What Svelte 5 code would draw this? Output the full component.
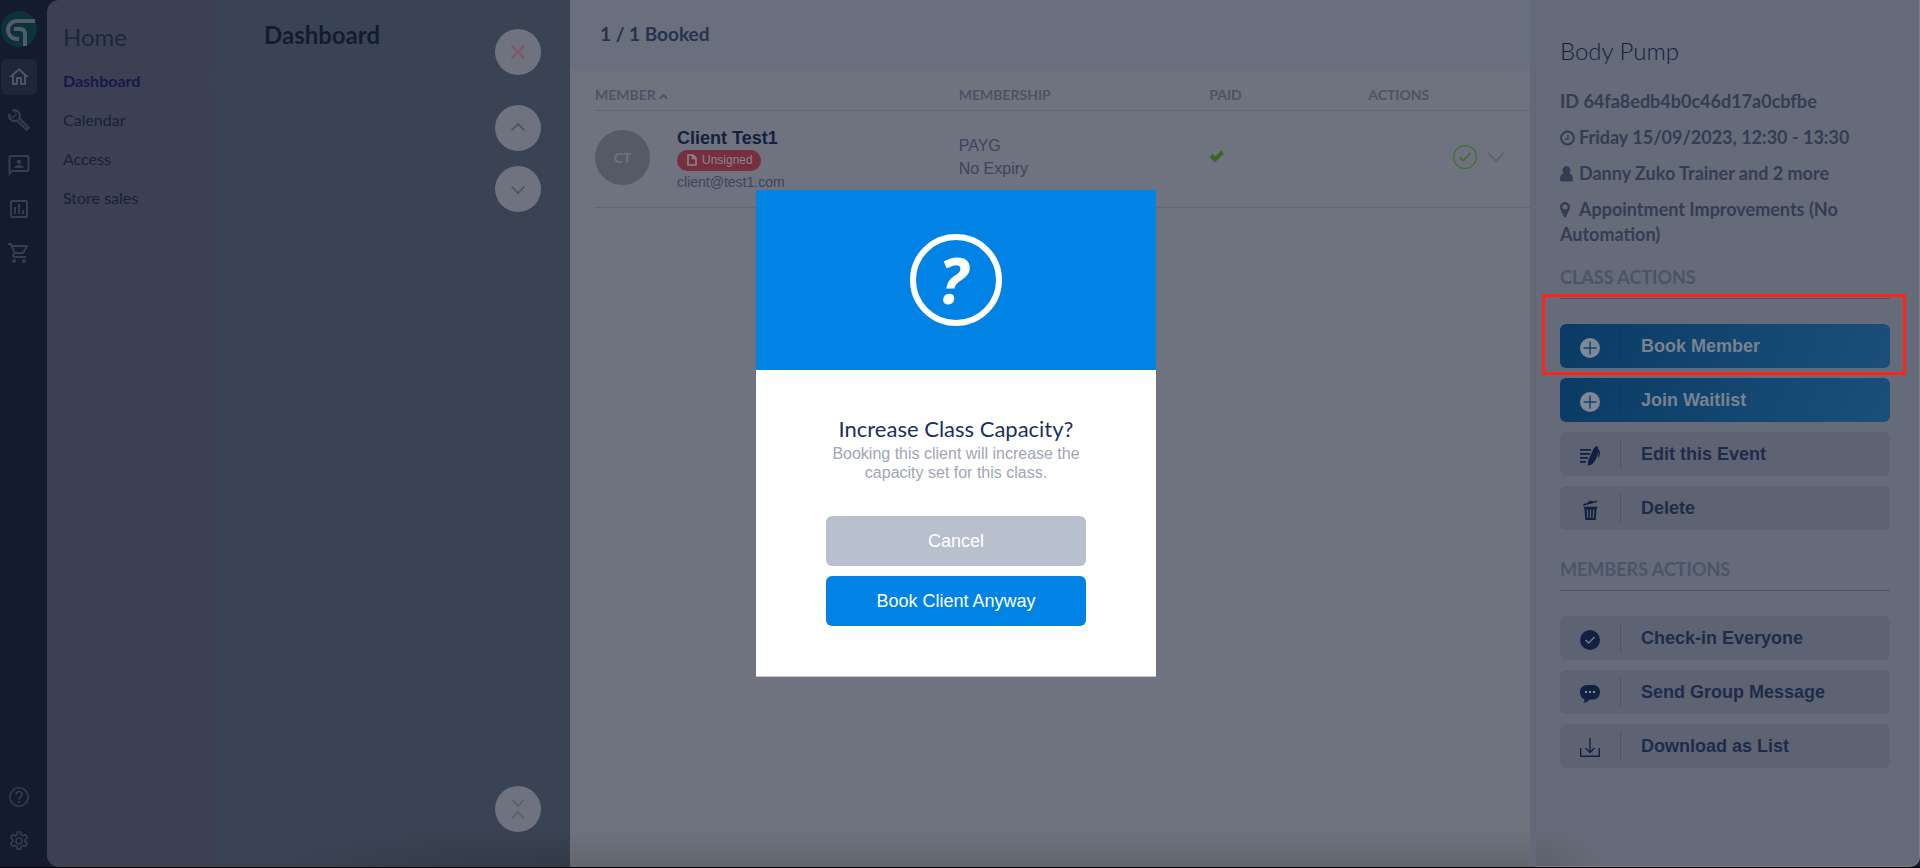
<script lang="ts">
    const links = ['Dashboard', 'Calendar', 'Access', 'Store sales'];

    const classActions = [
        { label: 'Book Member', icon: 'plus', primary: true, marked: true },
        { label: 'Join Waitlist', icon: 'plus', primary: true },
        { label: 'Edit this Event', icon: 'edit' },
        { label: 'Delete', icon: 'trash' }
    ];

    const memberActions = [
        { label: 'Check-in Everyone', icon: 'check' },
        { label: 'Send Group Message', icon: 'message' },
        { label: 'Download as List', icon: 'download' }
    ];

    let modalOpen = $state(true);

    function closeModal() {
        modalOpen = false;
    }
</script>

{#snippet action(item: any)}
    <button class="action" class:primary={item.primary} class:marked={item.marked}>
        <span class="action-icon">
            <svg width="20" height="20" viewBox="0 0 20 20" fill="currentColor">
                {#if item.icon === 'plus'}
                    <circle cx="10" cy="10" r="10" />
                    <path d="M10 3.5v13M3.5 10h13" stroke="#12426a" stroke-width="1.4" />
                {:else if item.icon === 'edit'}
                    <path d="M0 3h11v1.8H0zM0 7h10v1.8H0zM0 11h8v1.8H0zM0 15h6v1.8H0z" />
                    <path d="M8 19.500c-.4-3 .4-6 2.200-9.600C12 6 13.500 2 15.500.500c.8-.7 2.300-.3 2.500.7l.1 2 1.400 1.600c.8 1 .6 2.200.2 3.600l-1 3-1-.3.9-3.500c.2-.8.100-1.200-.3-1.600-.5 2.500-1.500 5.600-3.300 8.700-1.500 2.600-3.300 4.300-7 4.800z" />
                {:else if item.icon === 'trash'}
                    <path d="M3 4.300 8 2.800 8.400 1.400l3.400-.8 1 .9L16.700.4l.4 1.500L3.500 5.800z" />
                    <path d="M3.700 6.700h13.600v1.600h-.7L15.700 20H5.300L4.400 8.300h-.7z" />
                    <path d="M7.300 9.500l.4 8.500M10.500 9.500V18M13.700 9.500l-.4 8.500" stroke="#5d6372" stroke-width="1.200" />
                {:else if item.icon === 'check'}
                    <circle cx="10" cy="10" r="10" />
                    <path d="M5.500 10l3.200 3 5.800-6" fill="none" stroke="#757b87" stroke-width="1.500" />
                {:else if item.icon === 'message'}
                    <path d="M7 1h6c4 0 7 3 7 7s-3 7.500-7 7.500H9.500c-1.200 1.800-3.200 3.300-6.500 3.500 1.200-1 1.700-2.300 1.500-3.800C1.500 14.300 0 11.500 0 8c0-4 3-7 7-7z" />
                    <path d="M5 8h2M9 8h2M13 8h2" stroke="#858b98" stroke-width="2" />
                {:else}
                    <path d="M.7 10v8.300h18.600V10M10 0v14M5.500 10l4.500 4.500L14.500 10" fill="none" stroke="currentColor" stroke-width="1.400" />
                {/if}
            </svg>
        </span>
        <span class="action-label">{item.label}</span>
    </button>
{/snippet}

<div class="app">
    <nav class="rail" aria-label="Main">
        <a class="logo" href="#home" aria-label="Glofox">
            <svg width="36" height="36" viewBox="0 0 36 36">
                <circle cx="18" cy="18" r="18" fill="#0a3439" />
                <path d="M34 10H16a9 9 0 0 0 0 18h2M13 18h6q5 0 5 5v12" fill="none" stroke="#535b6a" stroke-width="4" />
            </svg>
        </a>
        <a class="rail-link current" href="#home" aria-label="Home">
            <svg width="24" height="24" viewBox="0 0 24 24" fill="currentColor"><path d="M12 5.700l5 4.500V18h-2v-6H9v6H7v-7.800l5-4.500M12 3 2 12h3v8h6v-6h2v6h6v-8h3z" /></svg>
        </a>
        <a class="rail-link" href="#setup" aria-label="Setup">
            <svg width="24" height="24" viewBox="0 0 24 24" fill="currentColor"><path d="M22.600 18.200 13.500 9.100c.9-2.300.4-5-1.500-6.900C10 .2 7.100-.2 4.700.8l4.200 4.300-3 3-4.300-4.200C.5 6.300 1 9.200 3 11.200c1.900 1.900 4.600 2.400 6.900 1.500l9.100 9.100c.4.4 1 .4 1.400 0l2.200-2.200c.5-.4.5-1 0-1.400zM19.700 19.700l-9.500-9.500c-.6.5-1.300.7-2 .8-1.300.2-2.700-.2-3.700-1.200C3.500 8.900 3 7.700 3 6.500l3 3L10.200 5.200l-3-3c1.200 0 2.400.5 3.300 1.400 1 1 1.500 2.500 1.200 3.900-.1.700-.4 1.400-.9 2l9.500 9.500z" /></svg>
        </a>
        <a class="rail-link" href="#leads" aria-label="Leads">
            <svg width="24" height="24" viewBox="0 0 24 24" fill="currentColor"><path d="M20.500 2h-17C2.400 2 1.500 2.900 1.500 4v19l4-4h15c1.100 0 2-.9 2-2V4c0-1.100-.9-2-2-2zm0 15H4.700l-1.200 1.200V4h17zM12 11a2.300 2.300 0 1 0 0-4.600A2.300 2.300 0 0 0 12 11zm4.500 4v-.7c0-1.500-3-2.300-4.500-2.300s-4.500.8-4.500 2.300v.7z" /></svg>
        </a>
        <a class="rail-link" href="#reports" aria-label="Reports">
            <svg width="24" height="24" viewBox="0 0 24 24" fill="currentColor"><path d="M19 3H5a2 2 0 0 0-2 2v14a2 2 0 0 0 2 2h14a2 2 0 0 0 2-2V5a2 2 0 0 0-2-2zm0 16H5V5h14zM7 10h2v7H7zM11 7h2v10h-2zM15 13h2v4h-2z" /></svg>
        </a>
        <a class="rail-link" href="#store" aria-label="Store">
            <svg width="24" height="24" viewBox="0 0 24 24" fill="currentColor"><path d="M15.550 13c.75 0 1.410-.41 1.750-1.030l3.580-6.490A.996.996 0 0 0 20.010 4H5.210l-.94-2H1v2h2l3.600 7.590-1.350 2.440C4.520 15.370 5.480 17 7 17h12v-2H7l1.100-2h7.450zM6.160 6h12.150l-2.760 5H8.530L6.160 6zM7 18c-1.100 0-2 .9-2 2s.9 2 2 2 2-.9 2-2-.9-2-2-2zm10 0c-1.100 0-2 .9-2 2s.9 2 2 2 2-.9 2-2-.9-2-2-2z" /></svg>
        </a>
        <a class="rail-link rail-bottom" href="#help" aria-label="Help">
            <svg width="24" height="24" viewBox="0 0 24 24" fill="none" stroke="currentColor" stroke-width="1.600"><circle cx="12" cy="12" r="9.200" /><path d="M9 9.500a3 3 0 1 1 4.700 2.500c-1 .7-1.700 1.200-1.700 2.500M12 16v2" /></svg>
        </a>
        <a class="rail-link" href="#settings" aria-label="Settings">
            <svg width="24" height="24" viewBox="0 0 24 24" fill="none" stroke="currentColor" stroke-width="1.600" stroke-linejoin="round"><path d="M10.300 3h3.400l.5 2.700 1.800 1 2.600-.9 1.700 2.900-2.100 1.800v2.100l2.100 1.800-1.700 2.900-2.600-.9-1.800 1-.5 2.700h-3.400l-.5-2.700-1.800-1-2.600.9-1.700-2.900 2.100-1.800v-2.100L3.700 8.700l1.700-2.900 2.600.9 1.800-1z" /><circle cx="12" cy="12" r="3" /></svg>
        </a>
    </nav>

    <aside class="submenu">
        <h2>Home</h2>
        <ul>
            {#each links as link, i}
                <li class:active={i === 0}><a href="#{link}">{link}</a></li>
            {/each}
        </ul>
    </aside>

    <section class="dashboard">
        <h1>Dashboard</h1>
        <div class="controls">
            <button class="round close" aria-label="Close">
                <svg width="16" height="16" viewBox="0 0 16 16"><path d="M2 2l12 12M14 2 2 14" /></svg>
            </button>
            <button class="round" aria-label="Previous">
                <svg width="16" height="16" viewBox="0 0 16 16"><path d="M1.500 10.500 8 4l6.500 6.500" /></svg>
            </button>
            <button class="round" aria-label="Next">
                <svg width="16" height="16" viewBox="0 0 16 16"><path d="M1.500 5.500 8 12l6.500-6.500" /></svg>
            </button>
            <button class="round collapse" aria-label="Collapse">
                <svg width="16" height="22" viewBox="0 0 16 22"><path d="M2.500 2 8 8l5.500-6M2.500 20 8 14l5.500 6" /></svg>
            </button>
        </div>
    </section>

    <main>
        <header>1 / 1 Booked</header>
        <div class="table-wrap">
            <table>
                <thead>
                    <tr>
                        <th class="member-col">MEMBER <svg width="9" height="7" viewBox="0 0 9 7"><path d="M1 5.500 4.500 2 8 5.500" /></svg></th>
                        <th class="membership-col">MEMBERSHIP</th>
                        <th class="paid-col">PAID</th>
                        <th>ACTIONS</th>
                    </tr>
                </thead>
                <tbody>
                    <tr>
                        <td>
                            <div class="member">
                                <span class="avatar">CT</span>
                                <div class="member-info">
                                    <strong>Client Test1</strong>
                                    <span class="pill">
                                        <svg width="10" height="12" viewBox="0 0 10 12"><path d="M1 1h5l3 3v7H1zM5.500 1v3.500H9" /></svg>
                                        Unsigned
                                    </span>
                                    <span class="email">client@test1.com</span>
                                </div>
                            </div>
                        </td>
                        <td class="membership">PAYG<br />No Expiry</td>
                        <td>
                            <svg class="paid" width="16" height="12" viewBox="0 0 16 12"><path d="M2 5.500l4 4L13.500 2" /></svg>
                        </td>
                        <td>
                            <div class="row-actions">
                                <button class="plain" aria-label="Check in">
                                    <svg width="24" height="24" viewBox="0 0 24 24" stroke="#3d6f31"><circle cx="12" cy="12" r="11.400" stroke-width="1.200" /><path d="M6.500 12.500l3.500 3.300 7.500-7.600" stroke-width="1.800" /></svg>
                                </button>
                                <button class="plain" aria-label="More">
                                    <svg width="18" height="12" viewBox="0 0 18 12" stroke="#5c6372"><path d="M1 1.500l8 8.500 8-8.500" stroke-width="2" /></svg>
                                </button>
                            </div>
                        </td>
                    </tr>
                </tbody>
            </table>
        </div>
    </main>

    <aside class="event">
        <h2>Body Pump</h2>
        <p>ID 64fa8edb4b0c46d17a0cbfbe</p>
        <p>
            <svg width="15" height="16" viewBox="0 0 15 16"><circle cx="7.500" cy="8" r="6.400" fill="none" stroke="currentColor" stroke-width="2" /><path d="M8 4.500V9H5" fill="none" stroke="currentColor" stroke-width="1.300" /></svg>Friday 15/09/2023, 12:30 - 13:30
        </p>
        <p>
            <svg width="15" height="16" viewBox="0 0 15 16"><path d="M6.500 0a4 4.300 0 0 1 2.700 7.500C11.500 7.600 13 9.500 13 13c0 1.700-.8 2.600-2.300 2.600H2.300C.8 15.600 0 14.700 0 13c0-3.500 1.500-5.400 3.800-5.500A4 4.300 0 0 1 6.500 0z" fill="currentColor" /></svg>Danny Zuko Trainer and 2 more
        </p>
        <p>
            <svg width="15" height="16" viewBox="0 0 15 16"><path d="M5 0a5 5 0 0 1 5 5c0 2-1 3.500-4 10q-1 1.500-2 0C1 8.500 0 7 0 5a5 5 0 0 1 5-5zm0 2.500a2.500 2.500 0 1 0 0 5 2.500 2.500 0 0 0 0-5z" fill="currentColor" /></svg>Appointment Improvements (No Automation)
        </p>
        <h3>CLASS ACTIONS</h3>
        <div class="actions">
            {#each classActions as item}
                {@render action(item)}
            {/each}
        </div>
        <h3>MEMBERS ACTIONS</h3>
        <div class="actions">
            {#each memberActions as item}
                {@render action(item)}
            {/each}
        </div>
    </aside>
</div>

{#if modalOpen}
    <div class="overlay">
        <div class="modal" role="dialog" aria-modal="true" aria-labelledby="modal-title">
            <div class="modal-head">
                <span class="question">?</span>
            </div>
            <div class="modal-body">
                <h2 id="modal-title">Increase Class Capacity?</h2>
                <p>Booking this client will increase the capacity set for this class.</p>
                <button class="cancel" onclick={closeModal}>Cancel</button>
                <button class="confirm" onclick={closeModal}>Book Client Anyway</button>
            </div>
        </div>
    </div>
{/if}

<style>
    :global(body) {
        margin: 0;
        background: #05070d;
    }

    .app {
        display: flex;
        box-sizing: border-box;
        min-height: 100vh;
        background: #131c2f;
        border-bottom: 1px solid #000;
        font-family: Lato, 'Liberation Sans', sans-serif;
        color: #1a253a;
    }

    h1, h2, h3, p, ul {
        margin: 0;
        padding: 0;
    }

    a {
        color: inherit;
        text-decoration: none;
    }

    button {
        border: 0;
        padding: 0;
        font-family: 'Liberation Sans', Arial, sans-serif;
        cursor: pointer;
    }

    .rail {
        display: flex;
        flex-direction: column;
        align-items: flex-start;
        gap: 8px;
        flex: none;
        box-sizing: border-box;
        width: 47px;
        padding: 11px 1px 8px;
    }

    .logo {
        height: 36px;
        margin-bottom: 4px;
    }

    .rail-link {
        display: flex;
        align-items: center;
        justify-content: center;
        width: 36px;
        height: 36px;
        border-radius: 6px;
        color: #343e50;
    }

    .rail-link.current {
        background: #1e2739;
        color: #4c5564;
    }

    .rail-bottom {
        margin-top: auto;
    }

    .submenu {
        flex: none;
        box-sizing: border-box;
        width: 170px;
        padding: 22px 0 0 16px;
        background: #3c4053;
        border-radius: 12px 0 0 12px;
    }

    .submenu h2 {
        font-size: 24px;
        font-weight: 400;
        line-height: 30px;
        color: #1c2639;
    }

    .submenu ul {
        margin-top: 9px;
        list-style: none;
    }

    .submenu li {
        position: relative;
        font-size: 16px;
        line-height: 39px;
        color: #172134;
    }

    .submenu li.active {
        font-weight: 700;
        color: #15194a;
    }

    .submenu li.active::after {
        content: '';
        position: absolute;
        right: 0;
        top: 8px;
        border: 11px solid transparent;
        border-left: 0;
        border-right-color: #3a4353;
    }

    .dashboard {
        display: flex;
        justify-content: space-between;
        flex: none;
        box-sizing: border-box;
        width: 353px;
        padding: 20px 29px 35px 46px;
        background: radial-gradient(ellipse 300px 40px at 100% 100%, #323a48, #3a4353);
        border-left: 1px solid #384151;
    }

    .dashboard h1 {
        font-size: 24px;
        line-height: 30px;
        color: #131c2f;
    }

    .controls {
        display: flex;
        flex-direction: column;
        gap: 15px;
        padding-top: 9px;
    }

    .round {
        display: flex;
        align-items: center;
        justify-content: center;
        width: 46px;
        height: 46px;
        border-radius: 50%;
        background: #6e737f;
    }

    .round svg {
        fill: none;
        stroke: #4a5366;
        stroke-width: 1.7;
    }

    .round.close {
        margin-bottom: 15px;
    }

    .round.close svg {
        stroke: #835566;
        stroke-width: 2;
        stroke-linecap: round;
    }

    .round.collapse {
        margin-top: auto;
    }

    .round.collapse svg {
        stroke: #565e70;
    }

    main {
        flex: 1;
        min-width: 0;
        background: linear-gradient(to top, #62666f, #6e737f 40px);
    }

    main header {
        box-sizing: border-box;
        height: 69px;
        padding: 20px 30px;
        background: #696f7d;
        font-size: 19px;
        font-weight: 700;
        line-height: 28px;
        color: #27324c;
    }

    .table-wrap {
        padding: 11px 0 0 25px;
    }

    table {
        width: 100%;
        border-collapse: collapse;
        table-layout: fixed;
    }

    th, td {
        padding: 0;
        border-bottom: 1px solid #616775;
        text-align: left;
    }

    th {
        height: 28px;
        padding-bottom: 2px;
        font-size: 14px;
        font-weight: 700;
        color: #4b5366;
    }

    th svg {
        fill: none;
        stroke: currentColor;
        stroke-width: 2;
    }

    .member-col {
        width: 38.9%;
    }

    .membership-col {
        width: 26.8%;
    }

    .paid-col {
        width: 17%;
    }

    td {
        height: 92px;
        padding-bottom: 4px;
        font-family: 'Liberation Sans', Arial, sans-serif;
    }

    .member {
        display: flex;
        align-items: center;
        gap: 27px;
    }

    .avatar {
        display: flex;
        align-items: center;
        justify-content: center;
        width: 55px;
        height: 55px;
        border-radius: 50%;
        background: #545a66;
        color: #6e737f;
        font-family: Lato, sans-serif;
        font-size: 14px;
        font-weight: 700;
    }

    .member-info {
        display: flex;
        flex-direction: column;
        align-items: flex-start;
        padding-top: 4px;
    }

    .member-info strong {
        font-size: 18px;
        line-height: 24px;
        color: #142141;
    }

    .pill {
        display: flex;
        align-items: center;
        gap: 5px;
        height: 21px;
        padding: 0 8px 0 10px;
        border-radius: 11px;
        background: #762f3f;
        font-size: 12px;
        color: #858893;
    }

    .pill svg {
        fill: none;
        stroke: currentColor;
        stroke-width: 1.6;
    }

    .email {
        font-size: 14px;
        line-height: 22px;
        color: #3b455c;
    }

    .membership {
        font-size: 16px;
        line-height: 23px;
        color: #3b455c;
    }

    .paid {
        fill: none;
        stroke: #356827;
        stroke-width: 4;
    }

    .row-actions {
        display: flex;
        align-items: center;
        justify-content: flex-end;
        gap: 10px;
        padding-right: 25px;
    }

    .plain {
        display: flex;
        background: none;
    }

    .plain svg {
        fill: none;
    }

    .event {
        flex: none;
        box-sizing: border-box;
        width: 390px;
        padding: 36px 29px 0 24px;
        border-left: 6px solid #626979;
        border-right: 1px solid #777e8a;
        border-bottom: 1px solid #777e8a;
        border-bottom-right-radius: 10px;
        background: radial-gradient(ellipse 70px 40px at 0 100%, #5c616d, #656b78);
    }

    .event h2 {
        margin-bottom: 23px;
        font-size: 24px;
        font-weight: 300;
        line-height: 30px;
        color: #142141;
    }

    .event p {
        margin-bottom: 11px;
        font-size: 18px;
        font-weight: 700;
        line-height: 25px;
        color: #333d54;
    }

    .event p svg {
        margin-right: 4px;
        vertical-align: -2px;
    }

    .event h3 {
        margin-bottom: 25px;
        padding: 7px 0 8px;
        border-bottom: 1px solid #4a556b;
        font-size: 18px;
        font-weight: 700;
        line-height: 25px;
        color: #4b5468;
    }

    .actions {
        display: flex;
        flex-direction: column;
        gap: 10px;
        margin-bottom: 20px;
    }

    .action {
        position: relative;
        display: flex;
        align-items: center;
        height: 44px;
        border-radius: 6px;
        background: #5d6372;
        color: #122042;
        text-align: left;
    }

    .action-icon {
        display: flex;
        align-items: flex-end;
        justify-content: center;
        box-sizing: border-box;
        width: 61px;
        height: 30px;
        padding-bottom: 3px;
        border-right: 1px solid #4c566b;
    }

    .action-label {
        padding-left: 20px;
        font-size: 18px;
        font-weight: 700;
        color: #1e2c4a;
    }

    .action.primary {
        background: linear-gradient(115deg, #0a3b65, #1b4f79);
        color: #7e8896;
    }

    .action.primary .action-icon {
        border-color: #0a375f;
    }

    .action.primary .action-label {
        color: #788290;
    }

    .action.marked::after {
        content: '';
        position: absolute;
        inset: -30px -16px -7px -18px;
        border: 3px solid #ff2318;
        pointer-events: none;
    }

    .overlay {
        position: fixed;
        inset: 0 8px 1px 0;
        display: flex;
        align-items: center;
        justify-content: center;
    }

    .modal {
        width: 400px;
        background: #fff;
        border-bottom: 1px solid #c3c9d0;
        font-family: 'Liberation Sans', Arial, sans-serif;
        text-align: center;
    }

    .modal-head {
        display: flex;
        align-items: center;
        justify-content: center;
        height: 180px;
        background: #0083e5;
    }

    .question {
        display: flex;
        align-items: center;
        justify-content: center;
        box-sizing: border-box;
        width: 92px;
        height: 92px;
        padding-right: 6px;
        border: 6px solid #fff;
        border-radius: 50%;
        color: #fff;
        font: italic 700 64px/80px 'Open Sans', sans-serif;
    }

    .modal-body {
        display: flex;
        flex-direction: column;
        align-items: center;
        gap: 10px;
        padding: 44px 70px 50px;
    }

    .modal-body h2 {
        font-family: Lato, sans-serif;
        font-size: 22px;
        font-weight: 400;
        line-height: 30px;
        color: #1b3159;
        white-space: nowrap;
    }

    .modal-body p {
        margin: -10px 0 24px;
        font-size: 16px;
        line-height: 19px;
        color: #a0a5b7;
    }

    .modal-body button {
        width: 100%;
        height: 50px;
        border-radius: 6px;
        font-size: 18px;
        color: #fff;
    }

    .modal-body .cancel {
        background: #b8bfcd;
    }

    .modal-body .confirm {
        background: #0083e5;
    }
</style>
